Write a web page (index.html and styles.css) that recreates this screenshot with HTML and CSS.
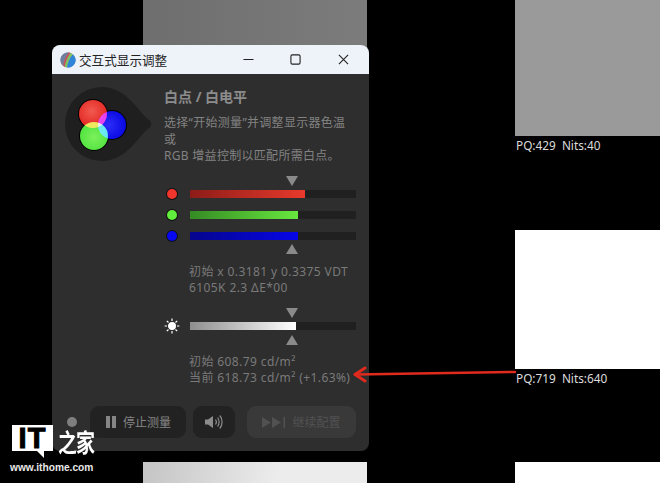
FILE: index.html
```html
<!DOCTYPE html>
<html lang="zh-CN">
<head>
    <meta charset="UTF-8">
    <meta name="viewport" content="width=device-width, initial-scale=1.0">
    <title>交互式显示调整</title>
    <link rel="stylesheet" href="styles.css">
</head>
<body>
    <div class="screen">
        <!-- Test patches behind the window -->
        <div class="patch patch-top"></div>
        <div class="patch patch-bottom"></div>
        <div class="patch patch-grey"></div>
        <div class="patch-label label-429">PQ:429&nbsp;&nbsp;Nits:40</div>
        <div class="patch patch-white"></div>
        <div class="patch-label label-719">PQ:719&nbsp;&nbsp;Nits:640</div>
        <div class="patch patch-white-low"></div>

        <div class="window">
            <div class="titlebar">
                <svg class="app-logo" viewBox="0 0 16 16">
                    <circle cx="8" cy="8" r="7.6" fill="#8a86a8"/>
                    <path d="M3.2 13.9C3.6 9 5.6 4.6 8.6.4 5 .2 1.5 2.5.6 6.2.1 9 1 12.2 3.2 13.9Z" fill="#6f7f9e"/>
                    <path d="M5 14.9C5.4 10.4 7.4 5.4 10.6.9 9.8.5 9.2.4 8.6.4 5.6 4.6 3.6 9 3.2 13.9Z" fill="#c2585c"/>
                    <path d="M7 15.5C7.6 11 9.6 5.8 12.9 2.5 12.2 1.8 11.4 1.3 10.6.9 7.4 5.4 5.4 10.4 5 14.9Z" fill="#7fc95a"/>
                    <path d="M7 15.5C11.6 16.2 15.6 12.6 15.6 8 15.6 5.8 14.6 3.9 12.9 2.5 9.6 5.8 7.6 11 7 15.5Z" fill="#2f86d8"/>
                </svg>
                <span class="title-text">交互式显示调整</span>
                <svg class="win-btn btn-min" viewBox="0 0 12 12"><path d="M.5 6H11.5"/></svg>
                <svg class="win-btn btn-max" viewBox="0 0 12 12"><rect x="1" y="1" width="10" height="10" rx="1.5"/></svg>
                <svg class="win-btn btn-close" viewBox="0 0 12 12"><path d="M1 1 11 11M11 1 1 11"/></svg>
            </div>

            <div class="win-body">
                <div class="intro">
                    <svg class="drop" viewBox="0 0 87 74">
                        <defs>
                            <radialGradient id="red-grad" cx="45%" cy="40%" r="65%">
                                <stop offset="0" stop-color="#f25a50"/>
                                <stop offset="1" stop-color="#e0201c"/>
                            </radialGradient>
                            <radialGradient id="green-grad" cx="50%" cy="55%" r="65%">
                                <stop offset="0" stop-color="#7cf05c"/>
                                <stop offset="1" stop-color="#46e038"/>
                            </radialGradient>
                            <radialGradient id="blue-grad" cx="40%" cy="50%" r="65%">
                                <stop offset="0" stop-color="#2c2cf8"/>
                                <stop offset="1" stop-color="#0505e0"/>
                            </radialGradient>
                        </defs>
                        <path d="M84 33C74 26 62 0 37 0A37 37 0 0 0 37 74C62 74 74 48 84 41 87 39 87 35 84 33Z" fill="#1f1f1f"/>
                        <circle cx="28" cy="27" r="15" fill="#000"/>
                        <circle cx="47" cy="38" r="15" fill="#000"/>
                        <circle cx="29" cy="49" r="15" fill="#000"/>
                        <circle class="light" cx="28" cy="27" r="14" fill="url(#red-grad)"/>
                        <circle class="light" cx="47" cy="38" r="14" fill="url(#blue-grad)"/>
                        <circle class="light" cx="29" cy="49" r="14" fill="url(#green-grad)"/>
                    </svg>
                    <div class="intro-text">
                        <h1>白点 / 白电平</h1>
                        <p>选择“开始测量”并调整显示器色温<br>或<br>RGB 增益控制以匹配所需白点。</p>
                    </div>
                </div>

                <div class="slider-group rgb-group">
                    <div class="marker marker-down"></div>
                    <div class="slider-rows">
                        <div class="slider-row">
                            <span class="dot dot-red"></span>
                            <div class="track"><div class="fill fill-red"></div></div>
                        </div>
                        <div class="slider-row">
                            <span class="dot dot-green"></span>
                            <div class="track"><div class="fill fill-green"></div></div>
                        </div>
                        <div class="slider-row">
                            <span class="dot dot-blue"></span>
                            <div class="track"><div class="fill fill-blue"></div></div>
                        </div>
                    </div>
                    <div class="marker marker-up"></div>
                    <p class="readout">初始 x 0.3181 y 0.3375 VDT<br>6105K 2.3 ΔE*00</p>
                </div>

                <div class="slider-group lum-group">
                    <div class="marker marker-down"></div>
                    <div class="slider-row">
                        <svg class="sun" viewBox="0 0 16 16">
                            <circle cx="8" cy="8" r="3.4"/>
                            <path d="M8 .6V3M8 13V15.4M.6 8H3M13 8H15.4M2.8 2.8 4.5 4.5M11.5 11.5 13.2 13.2M13.2 2.8 11.5 4.5M4.5 11.5 2.8 13.2"/>
                        </svg>
                        <div class="track"><div class="fill fill-white"></div></div>
                    </div>
                    <div class="marker marker-up"></div>
                    <p class="readout">初始 608.79 cd/m²<br>当前 618.73 cd/m² (+1.63%)</p>
                </div>

                <div class="footer">
                    <span class="status-dot"></span>
                    <button class="btn btn-stop">
                        <svg class="btn-icon" width="12" height="12" viewBox="0 0 12 12"><path d="M1 0H5V12H1ZM7 0H11V12H7Z"/></svg>
                        停止测量
                    </button>
                    <button class="btn btn-sound">
                        <svg class="sound-icon" width="18" height="16" viewBox="0 0 18 16">
                            <path class="cone" d="M0 5.5H3L8 2V14L3 10.5H0Z"/>
                            <path class="wave" d="M10.5 5.5C11.6 7 11.6 9 10.5 10.5M12.6 3.5C14.6 6 14.6 10 12.6 12.5M14.8 1.5C17.8 5 17.8 11 14.8 14.5"/>
                        </svg>
                    </button>
                    <button class="btn btn-next" disabled>
                        <svg class="btn-icon" width="24" height="11" viewBox="0 0 24 11"><path d="M0 0 9 5.5 0 11ZM10 0 19 5.5 10 11ZM21.5 0H23V11H21.5Z"/></svg>
                        继续配置
                    </button>
                </div>
            </div>
        </div>

        <!-- Annotation arrow -->
        <svg class="arrow" viewBox="0 0 170 20" width="170" height="20">
            <path class="arrow-line" d="M165 6 5 8.5"/>
            <path class="arrow-head" d="M15 2 5 8.5 15 15"/>
        </svg>

        <div class="watermark">
            <div class="wm-top">
                <div class="wm-it">IT</div>
                <div class="wm-cn">之家</div>
            </div>
            <div class="wm-url">www.ithome.com</div>
        </div>
    </div>
</body>
</html>
```

FILE: styles.css
```css
* {
    box-sizing: border-box;
}

body {
    margin: 0;
    background-color: #000;
    font-family: "Noto Sans", "Noto Sans CJK SC", sans-serif;
}

.screen {
    position: relative;
    width: 660px;
    height: 483px;
    overflow: hidden;
    background-color: #000;
}

.patch {
    position: absolute;
}

.patch-top {
    left: 143px;
    top: 0;
    width: 224px;
    height: 60px;
    background: linear-gradient(90deg, #6e6e6e, #7c7c7c 100%);
}

.patch-bottom {
    left: 143px;
    top: 462px;
    width: 224px;
    height: 21px;
    background: linear-gradient(100deg, #c4c4c4, #ececec 60%);
}

.patch-grey {
    left: 515px;
    top: 0;
    width: 145px;
    height: 136px;
    background-color: #9a9a9a;
}

.patch-white {
    left: 515px;
    top: 230px;
    width: 145px;
    height: 139px;
    background-color: #fff;
}

.patch-white-low {
    left: 515px;
    top: 462px;
    width: 145px;
    height: 21px;
    background-color: #fff;
}

.patch-label {
    position: absolute;
    left: 516px;
    font-size: 11.8px;
    line-height: 16px;
    color: #dcdcdc;
}

.label-429 {
    top: 137px;
}

.label-719 {
    top: 370px;
}

.window {
    position: absolute;
    left: 52px;
    top: 45px;
    width: 317px;
    height: 406px;
    border-radius: 8px;
    overflow: hidden;
    background-color: #2e2e2e;
}

.titlebar {
    display: flex;
    align-items: center;
    height: 29px;
    padding-left: 8px;
    background-color: #eef3f9;
}

.app-logo {
    width: 16px;
    height: 16px;
}

.title-text {
    margin-left: 3px;
    font-size: 12.6px;
    color: #222;
}

.win-btn {
    width: 11px;
    height: 11px;
    fill: none;
    stroke: #222;
    stroke-width: 1.2;
}

.btn-min {
    margin-left: auto;
}

.btn-max {
    margin-left: 36px;
}

.btn-close {
    margin-left: 37px;
    margin-right: 20px;
}

.intro {
    display: flex;
    gap: 12px;
    height: 78px;
    margin-top: 13px;
    padding-left: 13px;
}

.drop {
    width: 87px;
    height: 74px;
    flex: none;
    isolation: isolate;
}

.light {
    mix-blend-mode: screen;
}

.intro-text h1 {
    margin: 0;
    font-size: 14px;
    line-height: 20px;
    font-weight: bold;
    color: #8c8c8c;
}

.intro-text p {
    margin: 8px 0 0;
    font-size: 12px;
    line-height: 16.5px;
    letter-spacing: .3px;
    color: #828282;
}

.slider-group {
    padding-left: 115px;
}

.rgb-group {
    margin-top: 11px;
}

.lum-group {
    margin-top: 12px;
}

.marker {
    width: 0;
    height: 0;
    margin-left: 119px;
    border-left: 6px solid transparent;
    border-right: 6px solid transparent;
}

.marker-down {
    border-top: 10px solid #8a8a8a;
}

.marker-up {
    border-bottom: 10px solid #8a8a8a;
}

.rgb-group .marker-down {
    margin-bottom: 4px;
}

.rgb-group .marker-up {
    margin-top: 4px;
}

.lum-group .marker-down {
    margin-bottom: 4px;
}

.lum-group .marker-up {
    margin-top: 5px;
}

.slider-rows {
    display: flex;
    flex-direction: column;
    gap: 13px;
}

.slider-row {
    display: flex;
    align-items: center;
    height: 8px;
}

.dot {
    width: 10px;
    height: 10px;
    border-radius: 50%;
    flex: none;
    box-shadow: 0 0 0 1px #111;
    margin-right: 13px;
}

.dot-red {
    background-color: #f0352c;
}

.dot-green {
    background-color: #62ee3c;
}

.dot-blue {
    background-color: #0808f0;
}

.sun {
    width: 16px;
    height: 16px;
    flex: none;
    margin-left: -3px;
    margin-right: 10px;
    fill: #fff;
    stroke: #fff;
    stroke-width: 1.2;
}

.track {
    width: 166px;
    height: 8px;
    background-color: #202020;
}

.fill {
    height: 100%;
}

.fill-red {
    width: 115px;
    background: linear-gradient(90deg, #8c1c18, #e83a2c);
}

.fill-green {
    width: 108px;
    background: linear-gradient(90deg, #358a24, #68e83e);
}

.fill-blue {
    width: 108px;
    background: linear-gradient(90deg, #05058c, #0606e8);
}

.fill-white {
    width: 106px;
    background: linear-gradient(90deg, #8e8e8e, #fff);
}

.readout {
    margin: 10px 0 0 22px;
    font-size: 12px;
    line-height: 16px;
    letter-spacing: .4px;
    color: #7a7a7a;
    white-space: nowrap;
}

.lum-group .readout {
    margin-top: 9px;
}

.footer {
    display: flex;
    align-items: center;
    height: 32px;
    margin-top: 20px;
    padding-left: 15px;
}

.status-dot {
    width: 10px;
    height: 10px;
    margin-right: 13px;
    border-radius: 50%;
    background-color: #7f7f7f;
}

.btn {
    display: flex;
    align-items: center;
    justify-content: center;
    height: 32px;
    padding: 0;
    border: none;
    border-radius: 9px;
    font-family: inherit;
    font-size: 12px;
    background-color: #222;
    color: #858585;
}

.btn-stop {
    gap: 6px;
    width: 96px;
}

.btn-sound {
    width: 42px;
    margin-left: 7px;
}

.btn-next {
    gap: 6px;
    width: 109px;
    margin-left: 12px;
    background-color: #393939;
    color: #515151;
}

.btn-icon {
    fill: currentColor;
}

.sound-icon .cone {
    fill: #8c8c8c;
}

.sound-icon .wave {
    fill: none;
    stroke: #8c8c8c;
    stroke-width: 1.2;
}

.arrow {
    position: absolute;
    left: 350px;
    top: 366px;
    fill: none;
    stroke: #e02a1e;
    stroke-linecap: round;
    stroke-linejoin: round;
}

.arrow-line {
    stroke-width: 2.5;
}

.arrow-head {
    stroke-width: 3;
}

.watermark {
    position: absolute;
    left: 10px;
    top: 425px;
    width: 90px;
}

.wm-top {
    display: flex;
    align-items: flex-start;
    gap: 5px;
    padding-left: 2px;
}

.wm-it {
    position: relative;
    width: 41px;
    height: 26px;
    background-color: #fff;
    color: #000;
    font-family: "Liberation Sans", sans-serif;
    font-weight: bold;
    font-size: 29px;
    line-height: 26px;
    letter-spacing: 1px;
    text-align: center;
    -webkit-text-stroke: 1px #000;
}

.wm-it::after {
    content: "";
    position: absolute;
    left: 25px;
    top: 26px;
    border-top: 7px solid #fff;
    border-left: 7px solid transparent;
}

.wm-cn {
    font-family: "Noto Sans CJK SC", sans-serif;
    font-weight: bold;
    font-size: 19px;
    line-height: 26px;
    letter-spacing: -1px;
    color: #fff;
    white-space: nowrap;
    transform: scaleY(1.3);
    transform-origin: top;
}

.wm-url {
    margin-top: 10px;
    font-family: "Liberation Sans", sans-serif;
    font-weight: bold;
    font-size: 10.2px;
    line-height: 14px;
    color: #e8e8e8;
    white-space: nowrap;
}
```
